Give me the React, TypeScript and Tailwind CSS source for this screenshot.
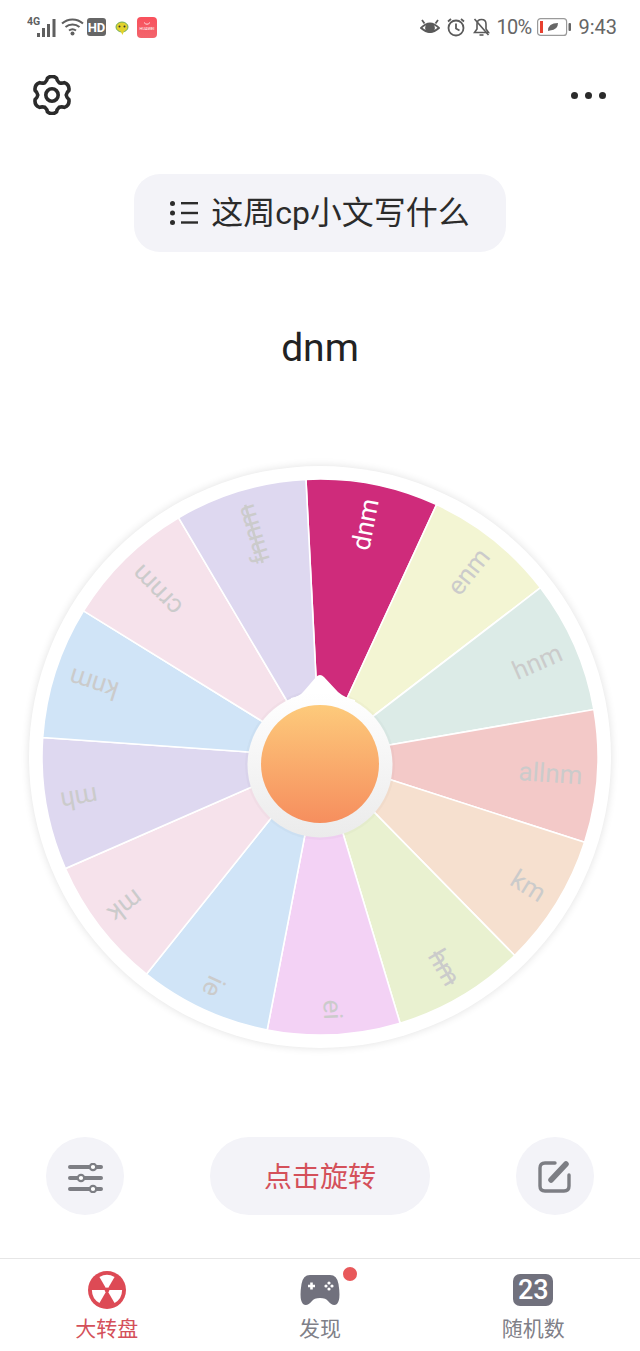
interface Slice {
  label: string
  color: string
  strike?: boolean
}

const slices: Slice[] = [
  { label: 'dnm', color: '#cf2b7b' },
  { label: 'enm', color: '#f3f5d3' },
  { label: 'hnm', color: '#dcebe7' },
  { label: 'allnm', color: '#f3c9c8' },
  { label: 'km', color: '#f6e0cf' },
  { label: 'hm', color: '#e9f1d0', strike: true },
  { label: 'ei', color: '#f3d2f5' },
  { label: 'ie', color: '#d0e4f7' },
  { label: 'mk', color: '#f6e2eb' },
  { label: 'mh', color: '#ded8f0' },
  { label: 'knm', color: '#d0e4f7' },
  { label: 'crnm', color: '#f6e2eb' },
  { label: 'fnnm', color: '#ded8f0', strike: true },
]

const C = 291
const R = 278
const STEP = 360 / slices.length
const START = -2.9

function point(deg: number, r: number) {
  const a = (deg * Math.PI) / 180
  return `${(C + r * Math.sin(a)).toFixed(2)} ${(C - r * Math.cos(a)).toFixed(2)}`
}

function Wheel() {
  return (
    <svg width="582" height="582" viewBox="0 0 582 582">
      <defs>
        <linearGradient id="hubRing" x1="0" y1="0" x2="0" y2="1">
          <stop offset="0" stopColor="#ffffff" />
          <stop offset="1" stopColor="#ebebeb" />
        </linearGradient>
        <linearGradient id="hubFace" x1="0" y1="0" x2="0" y2="1">
          <stop offset="0" stopColor="#fdca7b" />
          <stop offset="1" stopColor="#f68e5e" />
        </linearGradient>
      </defs>
      {slices.map((s, i) => {
        const a = START + i * STEP
        return (
          <path
            key={s.label}
            d={`M${C} ${C} L${point(a, R)} A${R} ${R} 0 0 1 ${point(a + STEP, R)} Z`}
            fill={s.color}
            stroke="#ffffff"
            strokeWidth="1.6"
          />
        )
      })}
      {slices.map((s, i) => {
        const a = START + (i + 0.5) * STEP
        return (
          <text
            key={s.label}
            x={C + 263}
            y={C + 9}
            textAnchor="end"
            fontSize="26"
            fill={i === 0 ? '#ffffff' : '#cbcbcb'}
            textDecoration={s.strike ? 'line-through' : undefined}
            transform={`rotate(${a - 90} ${C} ${C})`}
          >
            {s.label}
          </text>
        )
      })}
      <circle cx="291" cy="299" r="75" fill="#000000" opacity="0.02" />
      <path d="M262 232 Q270 231 275 225 L287 211 Q291 207 295 211 L309 226 Q316 232 326 234 L326 260 L262 260 Z" fill="#ffffff" />
      <circle cx="291" cy="299" r="72.5" fill="url(#hubRing)" />
      <circle cx="291" cy="298" r="59" fill="url(#hubFace)" />
    </svg>
  )
}

function gearPath() {
  const pts: string[] = []
  const polar = (deg: number, r: number) => {
    const a = (deg * Math.PI) / 180
    return `${(20 + r * Math.sin(a)).toFixed(2)} ${(20 - r * Math.cos(a)).toFixed(2)}`
  }
  for (let i = 0; i < 6; i++) {
    const a = i * 60
    pts.push(`${i === 0 ? 'M' : 'L'}${polar(a - 30, 14.2)}`)
    pts.push(`Q${polar(a - 19, 15)} ${polar(a - 15, 17.5)}`)
    pts.push(`Q${polar(a, 20.5)} ${polar(a + 15, 17.5)}`)
    pts.push(`Q${polar(a + 19, 15)} ${polar(a + 30, 14.2)}`)
  }
  return pts.join(' ') + ' Z'
}

function StatusLeft() {
  return (
    <div className="flex items-center">
      <svg width="30" height="22" viewBox="0 0 30 22" fill="#5f5f5f">
        <text x="0" y="9" fontSize="10.5" fontWeight="700" fill="#5f5f5f">4G</text>
        <rect x="10" y="17" width="3" height="4" />
        <rect x="15" y="12" width="3" height="9" />
        <rect x="20" y="8" width="3" height="13" />
        <rect x="25.5" y="3" width="3" height="18" />
      </svg>
      <svg className="ml-[4px]" width="23" height="20" viewBox="0 0 23 20" fill="none" stroke="#5f5f5f" strokeWidth="2">
        <path d="M1 6.5 C7 1 16 1 22 6.5" />
        <path d="M4.5 10 C8.5 6.5 14.5 6.5 18.5 10" />
        <path d="M8 13.5 C10 12 13 12 15 13.5" />
        <circle cx="11.5" cy="16.5" r="2" fill="#5f5f5f" stroke="none" />
      </svg>
      <div className="ml-[3px] flex h-[18px] w-[19px] items-center justify-center rounded-[3px] bg-[#666666] text-[13px] leading-none font-bold text-white">
        HD
      </div>
      <svg className="ml-[8px]" width="16" height="18" viewBox="0 0 15 18">
        <ellipse cx="7.5" cy="9" rx="6" ry="5" fill="#e2d22c" stroke="#6fae5a" strokeWidth="1" />
        <path d="M6 13 L8 17 L9.5 13 Z" fill="#e2d22c" />
        <circle cx="5" cy="8.5" r="1" fill="#333333" />
        <circle cx="10" cy="8.5" r="1" fill="#333333" />
      </svg>
      <div className="ml-[7px] flex h-[21px] w-[20px] flex-col items-center justify-center rounded-[4px] bg-gradient-to-b from-[#f9505c] to-[#f2646c]">
        <svg width="8" height="4" viewBox="0 0 8 4" fill="none" stroke="#ffffff" strokeWidth="0.8">
          <path d="M1 0.5 Q4 4 7 0.5" />
        </svg>
        <span className="text-[4px] leading-[6px] text-white">HUAWEI</span>
      </div>
    </div>
  )
}

function StatusRight() {
  return (
    <div className="flex items-center text-[#666666]">
      <svg width="20" height="20" viewBox="0 0 20 20" fill="none" stroke="#5a5a5a" strokeWidth="1.8">
        <path d="M1 11 Q10 2 19 11 Q10 19 1 11 Z" />
        <circle cx="10" cy="11" r="4" fill="#5a5a5a" />
        <path d="M2 3 L4.5 6.5 M18 3 L15.5 6.5" />
      </svg>
      <svg className="ml-[7px]" width="18" height="20" viewBox="0 0 18 20" fill="none" stroke="#5a5a5a" strokeWidth="1.8">
        <circle cx="9" cy="11" r="7.5" />
        <path d="M9 6.5 V11.5 L12.5 13.5" />
        <path d="M1 4.5 L4 2 M17 4.5 L14 2" />
      </svg>
      <svg className="ml-[8px]" width="17" height="20" viewBox="0 0 17 20" fill="none" stroke="#5a5a5a" strokeWidth="1.6">
        <path d="M4 7 Q4 2.5 8.5 2.5 Q13 2.5 13 7 V12 L15.5 15.5 H1.5 L4 12 Z" />
        <path d="M6.5 18 H10.5" />
        <path d="M1.5 2 L15.5 18" />
      </svg>
      <span className="ml-[6px] text-[20px] leading-none tracking-[-0.7px]">10%</span>
      <svg className="ml-[6px]" width="34" height="18" viewBox="0 0 34 18">
        <rect x="0.6" y="0.6" width="29" height="16.8" rx="3" fill="none" stroke="#9a9a9a" strokeWidth="1.2" />
        <rect x="3" y="3" width="3" height="12" fill="#e8402f" />
        <path d="M11 13 Q11 5 21 5 Q21 12 13 12.5 Z" fill="#666666" />
        <rect x="31.5" y="5" width="2.5" height="8" rx="1" fill="#666666" />
      </svg>
      <span className="ml-[7px] text-[20px] leading-none">9:43</span>
    </div>
  )
}

function NavLabel({ text, active }: { text: string; active?: boolean }) {
  return (
    <span className={`mt-[3px] text-[21px] leading-[30px] ${active ? 'text-[#d4505a]' : 'text-[#808088]'}`}>
      {text}
    </span>
  )
}

export default function App() {
  return (
    <div className="flex h-[1351px] w-[640px] flex-col bg-white font-['Roboto','Noto_Sans_CJK_SC',sans-serif]">
      <div className="flex h-[54px] items-center justify-between pr-[23px] pl-[27px]">
        <StatusLeft />
        <StatusRight />
      </div>

      <div className="flex h-[82px] items-center justify-between pr-[34px] pl-[32px]">
        <svg width="40" height="40" viewBox="0 0 40 40" fill="none" stroke="#2b2b2b" strokeWidth="3.6" strokeLinejoin="round">
          <path d={gearPath()} />
          <circle cx="20" cy="20" r="6.2" />
        </svg>
        <div className="flex gap-[7px]">
          <span className="h-[7px] w-[7px] rounded-full bg-[#2b2b2b]" />
          <span className="h-[7px] w-[7px] rounded-full bg-[#2b2b2b]" />
          <span className="h-[7px] w-[7px] rounded-full bg-[#2b2b2b]" />
        </div>
      </div>

      <div className="mx-auto mt-[38px] flex h-[78px] w-[372px] items-center justify-center rounded-[26px] bg-[#f3f3f8] text-[#2b2b2b]">
        <svg width="28" height="24" viewBox="0 0 28 24" fill="#2b2b2b">
          <circle cx="2.5" cy="2.5" r="2.5" />
          <circle cx="2.5" cy="12" r="2.5" />
          <circle cx="2.5" cy="21.5" r="2.5" />
          <rect x="11" y="1" width="17" height="2.4" />
          <rect x="11" y="10.8" width="17" height="2.4" />
          <rect x="11" y="20.3" width="17" height="2.4" />
        </svg>
        <span className="ml-[13px] text-[32px] leading-none">这周cp小文写什么</span>
      </div>

      <div className="mt-[70px] h-[52px] text-center text-[39px] leading-[52px] text-[#222222]">dnm</div>

      <div className="mx-auto mt-[92px] h-[582px] w-[582px] rounded-full bg-white shadow-[0_0_8px_rgba(0,0,0,0.12)]">
        <Wheel />
      </div>

      <div className="mt-[89px] flex h-[78px] items-start justify-between px-[46px]">
        <div className="flex h-[78px] w-[78px] items-center justify-center rounded-full bg-[#f3f3f8] pt-[4px] pl-[2px]">
          <svg width="36" height="30" viewBox="0 0 36 30" fill="#ffffff" stroke="#7d7e84" strokeWidth="4">
            <path d="M2 4 H33 M2 15 H33 M2 26 H33" strokeLinecap="round" />
            <circle cx="25" cy="4" r="3.2" strokeWidth="2.2" />
            <circle cx="13" cy="15" r="3.2" strokeWidth="2.2" />
            <circle cx="25" cy="26" r="3.2" strokeWidth="2.2" />
          </svg>
        </div>
        <div className="flex h-[78px] w-[220px] items-center justify-center rounded-full bg-[#f3f3f8] pt-[4px] text-[28px] text-[#d4505a]">
          点击旋转
        </div>
        <div className="flex h-[78px] w-[78px] items-center justify-center rounded-full bg-[#f3f3f8] pt-[2px]">
          <svg width="34" height="34" viewBox="0 0 34 34" fill="none" stroke="#7d7e84" strokeWidth="3.4">
            <path d="M17 3 H7 Q2 3 2 8 V26 Q2 31 7 31 H26 Q31 31 31 26 V15" strokeLinecap="round" />
            <path d="M13 20 L28 4" strokeWidth="5.5" strokeLinecap="round" />
          </svg>
        </div>
      </div>

      <div className="mt-[43px] grid flex-1 grid-cols-3 border-t border-[#e6e6e6]">
        <div className="flex flex-col items-center pt-[12px]">
          <svg className="mb-[2px]" width="38" height="38" viewBox="-19.5 -19.5 39 39">
            <circle r="19.5" fill="#dd4a55" />
            <path d="M0 0 L-7.75 -13.42 A15.5 15.5 0 0 1 7.75 -13.42 Z" fill="#ffffff" />
            <path d="M0 0 L15.5 0 A15.5 15.5 0 0 1 7.75 13.42 Z" fill="#ffffff" />
            <path d="M0 0 L-7.75 13.42 A15.5 15.5 0 0 1 -15.5 0 Z" fill="#ffffff" />
            <circle r="2.5" fill="#dd4a55" />
          </svg>
          <NavLabel text="大转盘" active />
        </div>
        <div className="relative flex flex-col items-center pt-[12px]">
          <svg width="40" height="40" viewBox="0 0 40 40">
            <path d="M10 4 H30 Q37 4 38.5 13 Q41 29 37 33 Q33 36 28 30 Q26 27 20 27 Q14 27 12 30 Q7 36 3 33 Q-1 29 1.5 13 Q3 4 10 4 Z" fill="#71717d" />
            <path d="M8 15 H15 M11.5 11.5 V18.5" stroke="#ffffff" strokeWidth="2.6" />
            <circle cx="29" cy="12" r="1.6" fill="#ffffff" />
            <circle cx="29" cy="18" r="1.6" fill="#ffffff" />
            <circle cx="26" cy="15" r="1.6" fill="#ffffff" />
            <circle cx="32" cy="15" r="1.6" fill="#ffffff" />
          </svg>
          <span className="absolute top-[8px] left-[130px] h-[14px] w-[14px] rounded-full bg-[#e8585a]" />
          <NavLabel text="发现" />
        </div>
        <div className="flex flex-col items-center pt-[12px]">
          <div className="mt-[3px] mb-[5px] flex h-[32px] w-[40px] items-center justify-center rounded-[7px] bg-[#71717d] text-[27px] leading-none font-medium text-white">
            23
          </div>
          <NavLabel text="随机数" />
        </div>
      </div>
    </div>
  )
}
